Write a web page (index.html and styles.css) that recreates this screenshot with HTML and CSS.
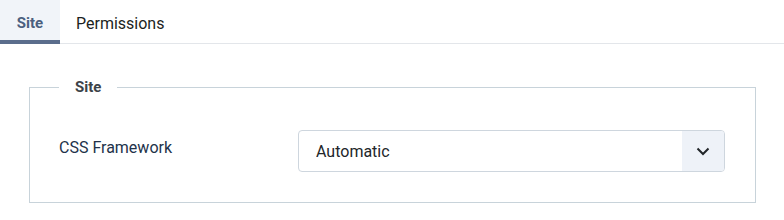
FILE: index.html
```html
<!DOCTYPE html>
<html lang="en">

<head>
    <meta charset="UTF-8">
    <meta name="viewport" content="width=device-width, initial-scale=1.0">
    <title>Site Options</title>
    <link rel="stylesheet" href="styles.css">
</head>

<body>
    <div class="tabs">
        <button class="tab active">Site</button>
        <button class="tab">Permissions</button>
    </div>

    <div class="tab-panel">
        <fieldset class="options-group">
            <legend>Site</legend>
            <div class="control-row">
                <label class="control-label" for="framework">CSS Framework</label>
                <div class="select-wrap">
                    <select id="framework" class="custom-select">
                        <option>Automatic</option>
                    </select>
                    <span class="select-arrow">
                        <svg width="16" height="16" viewBox="0 0 16 16"><path d="M2.5 5.5 L8 11 L13.5 5.5" fill="none" stroke="#22262a" stroke-width="2"/></svg>
                    </span>
                </div>
            </div>
        </fieldset>
    </div>
</body>

</html>
```

FILE: styles.css
```css
body {
    margin: 0;
    padding: 0;
    background-color: #ffffff;
    color: #22262a;
    font-family: Roboto, "Noto Sans", sans-serif;
}

.tabs {
    display: flex;
    height: 40px;
    border-bottom: 1px solid #e3e6ea;
    padding-bottom: 3px;
}

.tab {
    border: none;
    background: none;
    font-family: inherit;
    font-size: 16px;
    color: #1c1f22;
    padding: 0 16px;
    height: 44px;
    padding-top: 2px;
    cursor: pointer;
}

.tab.active {
    width: 60px;
    background-color: #f1f4f9;
    color: #4b5f7f;
    font-weight: 700;
    font-size: 15px;
    border-bottom: 4px solid #5b6d8c;
    padding-top: 6px;
}

.tab-panel {
    padding: 34px 28px 0 29px;
}

.options-group {
    margin: 0;
    padding: 34px 30px 30px 29px;
    border: 1px solid #c8d3da;
    width: 727px;
    box-sizing: border-box;
}

.options-group legend {
    font-size: 15px;
    font-weight: 700;
    color: #3c4349;
    padding: 0 16px;
    margin-left: 0;
}

.control-row {
    display: flex;
    align-items: center;
}

.control-label {
    width: 239px;
    font-size: 16px;
    color: #22324a;
    margin-top: -8px;
}

.select-wrap {
    position: relative;
    width: 427px;
    height: 42px;
}

.custom-select {
    width: 100%;
    height: 100%;
    appearance: none;
    -webkit-appearance: none;
    border: 1px solid #ced6de;
    border-radius: 4px;
    background-color: #ffffff;
    padding: 0 17px;
    font-family: inherit;
    font-size: 16px;
    color: #22262a;
}

.select-arrow {
    position: absolute;
    top: 1px;
    right: 1px;
    bottom: 1px;
    width: 42px;
    background-color: #eef2f8;
    border-radius: 0 3px 3px 0;
    display: flex;
    align-items: center;
    justify-content: center;
    pointer-events: none;
}
```
